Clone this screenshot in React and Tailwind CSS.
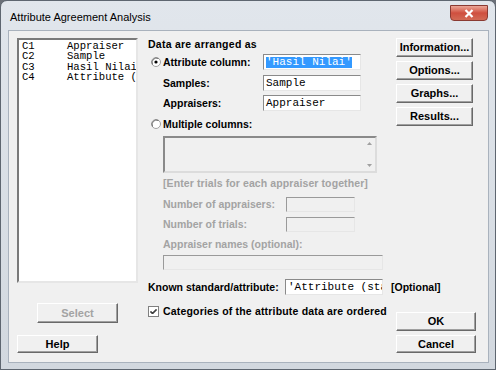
import React from 'react';

const btn =
  "flex items-center justify-center bg-[#f0f0f0] border border-t-white border-l-white border-r-[#696969] border-b-[#696969] shadow-[inset_-1px_-1px_0_#a0a0a0] text-[11px] font-bold leading-none";

function Radio({ checked }) {
  return (
    <svg width="10" height="10" viewBox="0 0 10 10" className="shrink-0">
      <circle cx="5" cy="5" r="4.5" fill="#fff" stroke="#a0a0a0" />
      <path d="M1.5 7.5 A4.5 4.5 0 0 1 7.5 1.5" fill="none" stroke="#6a6a6a" strokeWidth="1" />
      {checked && <circle cx="5" cy="5" r="1.6" fill="#000" />}
    </svg>
  );
}

function Check() {
  return (
    <svg width="11" height="11" viewBox="0 0 11 11" className="shrink-0">
      <rect x="0.5" y="0.5" width="10" height="10" fill="#fff" stroke="#808080" />
      <path d="M2.5 5 L4.5 7 L8.5 3 M2.5 6 L4.5 8 L8.5 4" fill="none" stroke="#000" strokeWidth="1" />
    </svg>
  );
}

function Field({ children, className }) {
  return (
    <div className={"bg-white border border-t-[#8a8a8a] border-l-[#8a8a8a] border-b-[#e6e6e6] border-r-[#e6e6e6] font-['Liberation_Mono',monospace] text-[11px] leading-none flex items-center pl-[2px] overflow-hidden whitespace-nowrap " + className}>
      {children}
    </div>
  );
}

function Disabled({ className }) {
  return <div className={"bg-[#f0f0f0] border border-t-[#9a9a9a] border-l-[#9a9a9a] border-b-[#e6e6e6] border-r-[#e6e6e6] " + className} />;
}

export default function App() {
  const cols = [
    ['C1', 'Appraiser'],
    ['C2', 'Sample'],
    ['C3', 'Hasil Nilai'],
    ['C4', 'Attribute (standard)'],
  ];

  return (
    <div className="w-[496px] h-[370px] bg-[#6b7078] font-['Liberation_Sans',Arial,sans-serif] text-black">
      <div className="w-full h-full rounded-t-[7px] border border-[#5e6670] bg-gradient-to-b from-[#e1e6ec] to-[#d2d8df] flex flex-col pl-[7px] pr-[6px] pb-[6px]">
        {/* title bar */}
        <div className="h-[29px] flex items-start shrink-0">
          <div className="pl-[2px] mt-[10px] text-[11px] leading-[13px]">Attribute Agreement Analysis</div>
          <div className="ml-auto mr-[1px] mt-[4px] w-[38px] h-[16px] rounded-b-[4px] border border-[#8a3a32] bg-gradient-to-b from-[#eaa597] via-[#cf4f3f] to-[#d26a55] flex items-center justify-center">
            <svg width="10" height="9" viewBox="0 0 10 9">
              <path d="M1.5 1 L8.5 8 M8.5 1 L1.5 8" stroke="#fff" strokeWidth="2.2" />
            </svg>
          </div>
        </div>

        {/* client area */}
        <div className="flex-1 bg-[#f0f0f0] border border-[#a9b2bd] flex pl-[8px] pt-[7px]">
          {/* left column */}
          <div className="w-[121px] flex flex-col">
            <div className="h-[245px] bg-white border-2 border-t-[#7a7a7a] border-l-[#7a7a7a] border-b-[#e6e6e6] border-r-[#e6e6e6] overflow-hidden pl-[3px] pt-[1px] font-['Liberation_Mono',monospace] text-[10.6px] leading-[10.3px] whitespace-nowrap">
              {cols.map(([c, n]) => (
                <div key={c} className="flex h-[10.3px]">
                  <span className="w-[45px] shrink-0">{c}</span>
                  <span>{n}</span>
                </div>
              ))}
            </div>
            <div className={btn + " w-[81px] h-[20px] mt-[20px] ml-[20px] text-[#a3a3a3]"}>Select</div>
            <div className={btn + " w-[81px] h-[18px] mt-[12px]"}>Help</div>
          </div>

          {/* middle column */}
          <div className="w-[240px] ml-[10px] flex flex-col text-[10.5px] font-bold leading-[13px]">
            <div className="h-[13px] tracking-[0.25px]">Data are arranged as</div>

            <div className="h-[16px] mt-[3px] flex items-center">
              <span className="ml-[3px]"><Radio checked /></span>
              <span className="ml-[2px] w-[100px]">Attribute column:</span>
              <Field className="w-[98px] h-[16px]">
                <span className="bg-[#3399ff] text-white font-normal">'Hasil Nilai'</span>
              </Field>
            </div>
            <div className="h-[16px] mt-[5px] flex items-center">
              <span className="ml-[15px] w-[100px]">Samples:</span>
              <Field className="w-[98px] h-[16px] font-normal">Sample</Field>
            </div>
            <div className="h-[16px] mt-[4px] flex items-center">
              <span className="ml-[15px] w-[100px]">Appraisers:</span>
              <Field className="w-[98px] h-[16px] font-normal">Appraiser</Field>
            </div>

            <div className="h-[14px] mt-[6px] flex items-center">
              <span className="ml-[3px]"><Radio /></span>
              <span className="ml-[2px]">Multiple columns:</span>
            </div>

            <div className="ml-[15px] mt-[5px] w-[214px] h-[37px] border-2 border-t-[#8a8a8a] border-l-[#8a8a8a] border-b-[#dcdcdc] border-r-[#dcdcdc] flex justify-end">
              <div className="w-[12px] flex flex-col items-center justify-between py-[4px]">
                <svg width="5" height="3" viewBox="0 0 5 3"><path d="M0 3 L2.5 0 L5 3 Z" fill="#a0a0a0" /></svg>
                <svg width="5" height="3" viewBox="0 0 5 3"><path d="M0 0 L2.5 3 L5 0 Z" fill="#a0a0a0" /></svg>
              </div>
            </div>

            <div className="text-[#a3a3a3]">
              <div className="ml-[15px] mt-[4px] h-[13px] whitespace-nowrap tracking-[0.1px]">[Enter trials for each appraiser together]</div>
              <div className="h-[15px] mt-[7px] flex items-center">
                <span className="ml-[15px] w-[123px]">Number of appraisers:</span>
                <Disabled className="w-[69px] h-[15px]" />
              </div>
              <div className="h-[15px] mt-[5px] flex items-center">
                <span className="ml-[15px] w-[123px]">Number of trials:</span>
                <Disabled className="w-[69px] h-[15px]" />
              </div>
              <div className="ml-[15px] mt-[6px] h-[13px]">Appraiser names (optional):</div>
              <Disabled className="ml-[15px] mt-[4px] w-[220px] h-[15px]" />
            </div>

            <div className="h-[16px] mt-[9px] flex items-center whitespace-nowrap">
              <span className="w-[137px] shrink-0">Known standard/attribute:</span>
              <Field className="w-[98px] h-[16px] font-normal shrink-0">'Attribute (standard)'</Field>
              <span className="ml-[8px] shrink-0">[Optional]</span>
            </div>

            <div className="h-[13px] mt-[10px] flex items-center whitespace-nowrap">
              <Check />
              <span className="ml-[4px] tracking-[0.18px]">Categories of the attribute data are ordered</span>
            </div>
          </div>

          {/* right column */}
          <div className="ml-[8px] flex flex-col">
            <div className={btn + " w-[77px] h-[19px]"}>Information...</div>
            <div className={btn + " w-[77px] h-[19px] mt-[4px]"}>Options...</div>
            <div className={btn + " w-[77px] h-[19px] mt-[4px]"}>Graphs...</div>
            <div className={btn + " w-[77px] h-[19px] mt-[4px]"}>Results...</div>
            <div className={btn + " w-[80px] h-[19px] mt-[186px]"}>OK</div>
            <div className={btn + " w-[80px] h-[18px] mt-[4px]"}>Cancel</div>
          </div>
        </div>
      </div>
    </div>
  );
}
